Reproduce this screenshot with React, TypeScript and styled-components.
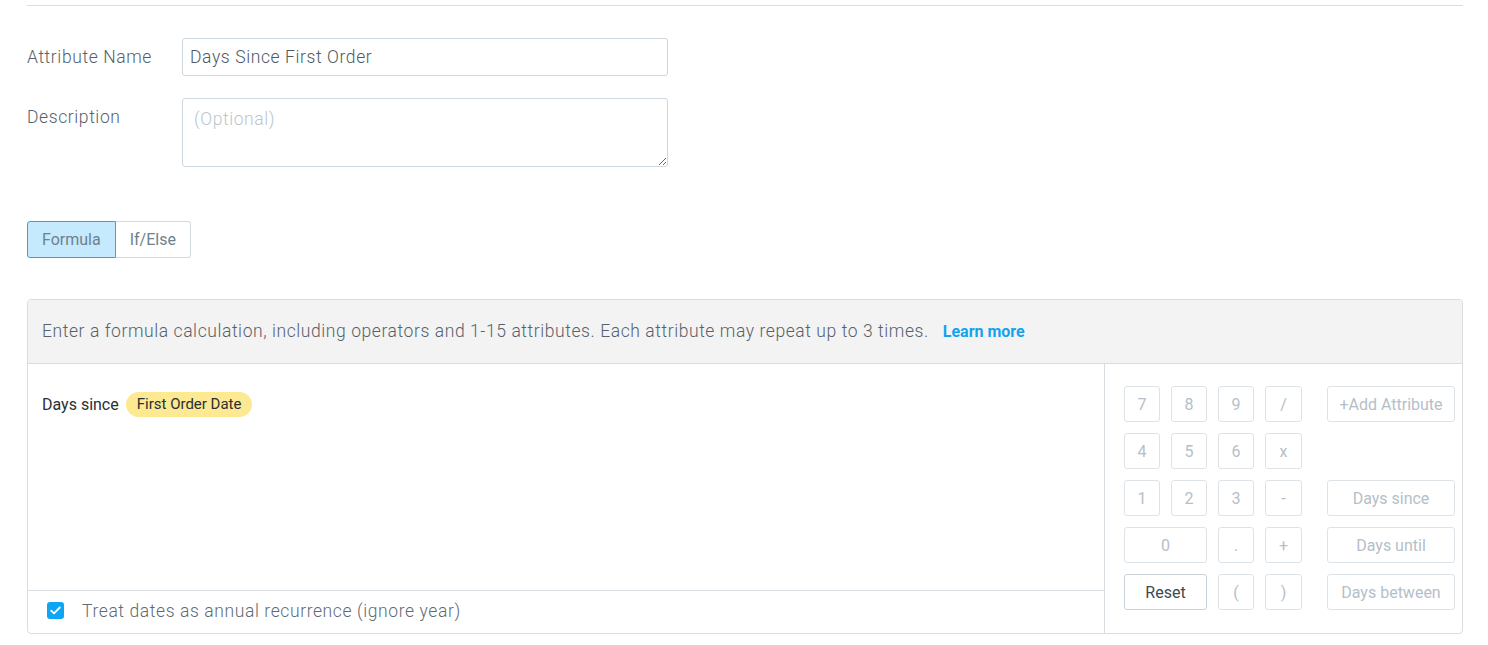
import React from "react";
import styled, { createGlobalStyle } from "styled-components";

const Global = createGlobalStyle`
  html, body { margin: 0; padding: 0; background: #ffffff; }
  body { font-family: Roboto, "Liberation Sans", sans-serif; }
  * { box-sizing: border-box; }
`;

const Page = styled.div`
  width: 1488px;
  padding: 5px 25px 0 27px;
`;

const Rule = styled.div`
  height: 1px;
  background: #dadfe3;
  margin-bottom: 32px;
`;

const FieldRow = styled.div<{ $gap?: number }>`
  display: flex;
  align-items: flex-start;
  margin-bottom: ${(p) => p.$gap ?? 0}px;
`;

const Label = styled.label`
  width: 155px;
  padding-top: 1px;
  font-size: 17.5px;
  letter-spacing: 0.6px;
  font-weight: 300;
  line-height: 37px;
  color: #56616a;
`;

const TextInput = styled.input`
  width: 486px;
  height: 38px;
  border: 1px solid #cfd8de;
  border-radius: 3px;
  padding: 0 7px;
  font-family: Roboto, "Liberation Sans", sans-serif;
  font-size: 17.5px;
  letter-spacing: 0.6px;
  font-weight: 300;
  color: #4d5862;
  outline: none;
`;

const TextArea = styled.textarea`
  width: 486px;
  height: 69px;
  border: 1px solid #cfd8de;
  border-radius: 3px;
  padding: 10px 11px;
  font-family: Roboto, "Liberation Sans", sans-serif;
  font-size: 17.5px;
  letter-spacing: 0.6px;
  font-weight: 300;
  color: #4d5862;
  outline: none;
  &::placeholder { color: #bcc5cc; }
`;

const Tabs = styled.div`
  display: flex;
  margin-top: 54px;
  margin-bottom: 41px;
`;

const Tab = styled.button<{ $active?: boolean }>`
  height: 37px;
  padding: 0 14px;
  border: 1px solid ${(p) => (p.$active ? "#27a9ee" : "#d2dae0")};
  background: ${(p) => (p.$active ? "#c5e9fd" : "#ffffff")};
  border-radius: ${(p) => (p.$active ? "3px 0 0 3px" : "0 3px 3px 0")};
  ${(p) => (p.$active ? "" : "border-left: none;")}
  font-family: Roboto, "Liberation Sans", sans-serif;
  font-size: 16px;
  color: #6f818d;
  cursor: pointer;
`;

const Panel = styled.div`
  border: 1px solid #d7dde1;
  border-radius: 4px;
  overflow: hidden;
`;

const PanelHeader = styled.div`
  height: 64px;
  background: #f3f3f3;
  border-bottom: 1px solid #d7dde1;
  display: flex;
  align-items: center;
  padding: 0 14px 1px;
  font-size: 17.5px;
  letter-spacing: 0.58px;
  font-weight: 300;
  color: #56616a;
`;

const LearnMore = styled.a`
  margin-left: 14px;
  font-size: 16px;
  letter-spacing: 0;
  font-weight: 700;
  color: #13a3ec;
  text-decoration: none;
`;

const PanelBody = styled.div`
  display: flex;
  height: 269px;
`;

const Editor = styled.div`
  flex: 1;
  display: flex;
  flex-direction: column;
  border-right: 1px solid #d7dde1;
`;

const FormulaArea = styled.div`
  flex: 1;
  padding: 28px 14px 0;
  display: flex;
  align-items: flex-start;
  gap: 7px;
`;

const Word = styled.span`
  font-size: 16px;
  line-height: 25px;
  color: #2a2f33;
`;

const Pill = styled.span`
  height: 25px;
  line-height: 25px;
  padding: 0 11px;
  border-radius: 13px;
  background: #fde992;
  font-size: 15px;
  color: #2a2f33;
`;

const CheckRow = styled.div`
  height: 43px;
  border-top: 1px solid #d7dde1;
  display: flex;
  align-items: center;
  padding: 0 0 3px 19px;
  gap: 18px;
  font-size: 17.5px;
  letter-spacing: 0.6px;
  font-weight: 300;
  color: #5f6a73;
`;

const CheckBox = styled.span`
  width: 17px;
  height: 17px;
  border-radius: 3px;
  background: #0ea5f5;
  display: inline-flex;
  align-items: center;
  justify-content: center;
  flex-shrink: 0;
`;

const Keypad = styled.div`
  width: 357px;
  padding: 22px 7px 0 19px;
  display: grid;
  grid-template-columns: 36px 36px 36px 37px 1fr;
  grid-auto-rows: 36px;
  column-gap: 11px;
  row-gap: 11px;
  align-content: start;
`;

const Key = styled.button<{ $span?: number; $wide?: boolean; $strong?: boolean }>`
  grid-column: span ${(p) => p.$span ?? 1};
  ${(p) => (p.$wide ? "width: 128px; justify-self: end;" : "")}
  height: 36px;
  border: 1px solid ${(p) => (p.$strong ? "#c9d2d9" : "#dde3e7")};
  border-radius: 3px;
  background: #ffffff;
  font-family: Roboto, "Liberation Sans", sans-serif;
  font-size: 16px;
  color: ${(p) => (p.$strong ? "#3d4953" : "#b4c0c9")};
  padding: 0;
  cursor: pointer;
`;

const Empty = styled.div``;

export default function App() {
  return (
    <Page>
      <Global />
      <Rule />
      <FieldRow $gap={22}>
        <Label>Attribute Name</Label>
        <TextInput defaultValue="Days Since First Order" />
      </FieldRow>
      <FieldRow>
        <Label>Description</Label>
        <TextArea placeholder="(Optional)" />
      </FieldRow>
      <Tabs>
        <Tab $active>Formula</Tab>
        <Tab>If/Else</Tab>
      </Tabs>
      <Panel>
        <PanelHeader>
          Enter a formula calculation, including operators and 1-15 attributes. Each attribute may repeat up to 3 times.
          <LearnMore href="#">Learn more</LearnMore>
        </PanelHeader>
        <PanelBody>
          <Editor>
            <FormulaArea>
              <Word>Days since</Word>
              <Pill>First Order Date</Pill>
            </FormulaArea>
            <CheckRow>
              <CheckBox>
                <svg width="11" height="9" viewBox="0 0 11 9" fill="none">
                  <path d="M1.2 4.6 L4 7.3 L9.8 1.5" stroke="#ffffff" strokeWidth="1.8" strokeLinecap="round" strokeLinejoin="round" />
                </svg>
              </CheckBox>
              Treat dates as annual recurrence (ignore year)
            </CheckRow>
          </Editor>
          <Keypad>
            <Key>7</Key>
            <Key>8</Key>
            <Key>9</Key>
            <Key>/</Key>
            <Key $wide>+Add Attribute</Key>
            <Key>4</Key>
            <Key>5</Key>
            <Key>6</Key>
            <Key>x</Key>
            <Empty />
            <Key>1</Key>
            <Key>2</Key>
            <Key>3</Key>
            <Key>-</Key>
            <Key $wide>Days since</Key>
            <Key $span={2}>0</Key>
            <Key>.</Key>
            <Key>+</Key>
            <Key $wide>Days until</Key>
            <Key $span={2} $strong>Reset</Key>
            <Key>(</Key>
            <Key>)</Key>
            <Key $wide>Days between</Key>
          </Keypad>
        </PanelBody>
      </Panel>
    </Page>
  );
}
